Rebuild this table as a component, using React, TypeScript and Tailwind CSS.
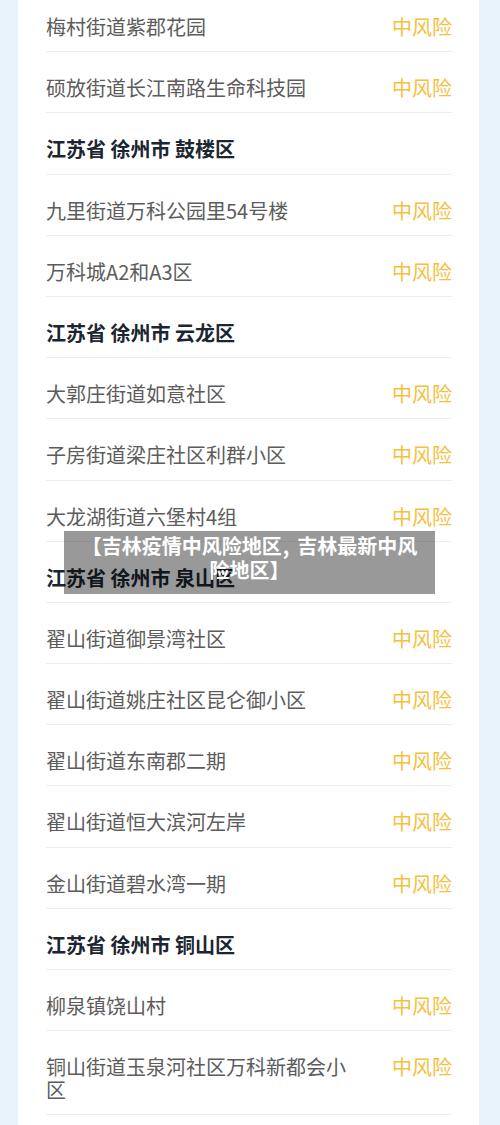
import React from "react";

type Item = { type: "row"; text: string } | { type: "head"; text: string };

const items: Item[] = [
  { type: "row", text: "梅村街道紫郡花园" },
  { type: "row", text: "硕放街道长江南路生命科技园" },
  { type: "head", text: "江苏省 徐州市 鼓楼区" },
  { type: "row", text: "九里街道万科公园里54号楼" },
  { type: "row", text: "万科城A2和A3区" },
  { type: "head", text: "江苏省 徐州市 云龙区" },
  { type: "row", text: "大郭庄街道如意社区" },
  { type: "row", text: "子房街道梁庄社区利群小区" },
  { type: "row", text: "大龙湖街道六堡村4组" },
  { type: "head", text: "江苏省 徐州市 泉山区" },
  { type: "row", text: "翟山街道御景湾社区" },
  { type: "row", text: "翟山街道姚庄社区昆仑御小区" },
  { type: "row", text: "翟山街道东南郡二期" },
  { type: "row", text: "翟山街道恒大滨河左岸" },
  { type: "row", text: "金山街道碧水湾一期" },
  { type: "head", text: "江苏省 徐州市 铜山区" },
  { type: "row", text: "柳泉镇饶山村" },
  { type: "row", text: "铜山街道玉泉河社区万科新都会小区" },
];

export default function App() {
  return (
    <div
      className="relative h-[1125px] w-[500px] overflow-hidden bg-[#e8f2fb] pl-[18px] pr-[21px]"
      style={{ fontFamily: '"Noto Sans CJK SC", "Noto Sans", sans-serif' }}
    >
      <div className="-mt-[9px] bg-white pb-[40px] pl-[28px] pr-[27px]">
        {items.map((it, i) =>
          it.type === "head" ? (
            <div
              key={i}
              className="border-b border-[#eeeeee] pt-[24px] pb-[13.2px] text-[20px] leading-[23px] font-bold text-[#1c2631] whitespace-pre"
            >
              {it.text}
            </div>
          ) : (
            <div
              key={i}
              className="flex items-start gap-[40px] border-b border-[#eeeeee] pt-[24px] pb-[13.2px] text-[20px] leading-[23px]"
            >
              <div className="min-w-0 flex-1 text-[#5c5c5c]">{it.text}</div>
              <div className="shrink-0 text-[#f5c03e]">中风险</div>
            </div>
          )
        )}
      </div>
      <div className="absolute left-[64px] top-[531px] h-[63px] w-[371px] bg-black/40 px-[12px] pt-[3px] text-center text-[20px] leading-[24px] font-bold text-white">
        【吉林疫情中风险地区<span className="ml-[1px] mr-[8px]">,</span>吉林最新中风险地区】
      </div>
    </div>
  );
}
